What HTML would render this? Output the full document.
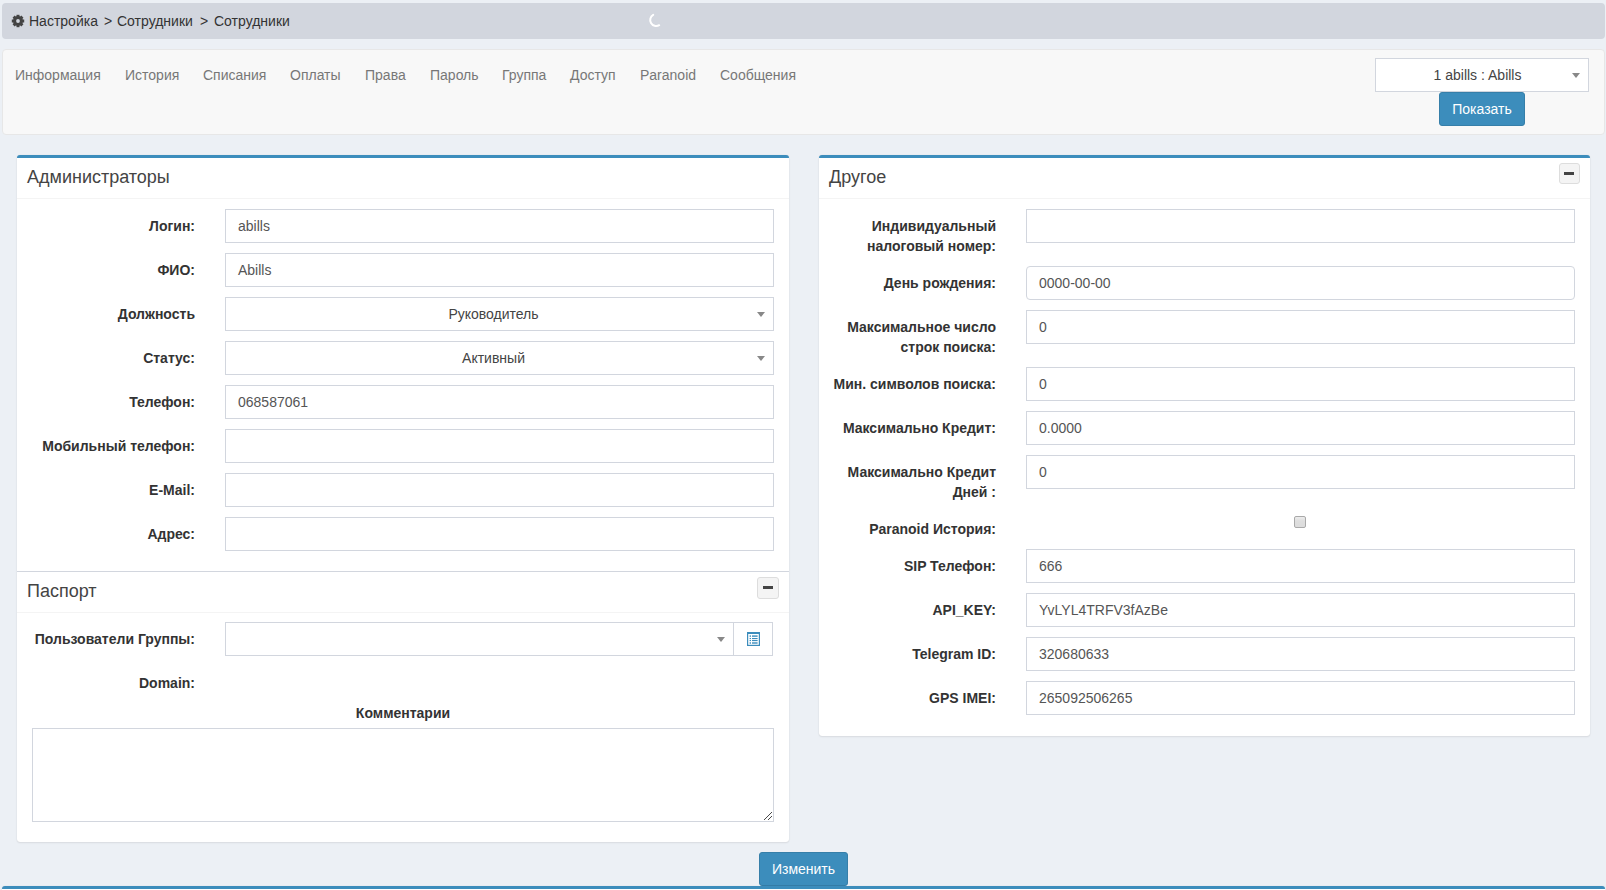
<!DOCTYPE html>
<html><head><meta charset="utf-8">
<style>
*{box-sizing:border-box;margin:0;padding:0}
html,body{width:1606px;height:890px;overflow:hidden;background:#ecf0f5;font-family:"Liberation Sans",sans-serif;font-size:14px;color:#333;line-height:20px}
.abs{position:absolute}
.bc{left:2px;top:3px;width:1603px;height:36px;background:#d2d6de;border-radius:4px;color:#333}
.bc span{position:absolute;top:8px;white-space:nowrap}
.nav{left:2px;top:49px;width:1603px;height:86px;background:#f8f8f8;border:1px solid #e7e7e7;border-radius:4px}
.nav a{position:absolute;top:15px;color:#777;text-decoration:none;white-space:nowrap}
.box{position:absolute;background:#fff;border-top:3px solid #3c8dbc;border-radius:3px;box-shadow:0 0 1px rgba(0,0,0,.13),0 1px 2px rgba(0,0,0,.08)}
.bh{position:absolute;left:0;right:0;top:0;height:41px;border-bottom:1px solid #f4f4f4}
.bt{position:absolute;left:10px;top:9px;font-size:18px;line-height:20px;color:#444;white-space:nowrap}
.lbl{position:absolute;font-weight:bold;text-align:right;color:#333;line-height:20px}
.inp{position:absolute;height:34px;border:1px solid #d2d6de;background:#fff;color:#555;padding:6px 12px;line-height:20px;white-space:nowrap}
.sel{text-align:center;color:#444}
.caret{position:absolute;width:0;height:0;border-left:4px solid transparent;border-right:4px solid transparent;border-top:5px solid #888}
.btn{position:absolute;background:#3c8dbc;border:1px solid #367fa9;border-radius:3px;color:#fff;text-align:center;line-height:20px;padding:6px 0}
.tool{position:absolute;background:#f4f4f4;border:1px solid #ddd;border-radius:3px}
.chk{position:absolute;width:12px;height:12px;border:1px solid #a9a9a9;border-radius:2px;background:linear-gradient(#ededed,#dedede 40%,#dcdcdc)}
.tool i{position:absolute;background:#444;height:3px;width:10px}
</style></head><body>

<!-- breadcrumb -->
<div class="abs bc">
  <svg class="abs" style="left:9px;top:11px" width="14" height="14" viewBox="0 0 14 14">
    <g fill="#444"><circle cx="7" cy="7" r="4.9"/>
    <rect x="5.5" y="0.8" width="3" height="12.4"/><rect x="0.8" y="5.5" width="12.4" height="3"/>
    <rect x="5.5" y="0.8" width="3" height="12.4" transform="rotate(45 7 7)"/><rect x="5.5" y="0.8" width="3" height="12.4" transform="rotate(-45 7 7)"/></g>
    <circle cx="7" cy="7" r="1.9" fill="#d2d6de"/>
  </svg>
  <span style="left:27px">Настройка</span>
  <span style="left:102px">&gt;</span>
  <span style="left:115px">Сотрудники</span>
  <span style="left:198px">&gt;</span>
  <span style="left:212px">Сотрудники</span>
  <svg class="abs" style="left:643px;top:6px" width="20" height="20" viewBox="0 0 20 20">
    <path d="M8.2 5.8 A6 6 0 0 0 14.2 16.2" fill="none" stroke="#fff" stroke-width="2" stroke-linecap="round"/>
  </svg>
</div>

<!-- nav tabs -->
<div class="abs nav">
  <a style="left:12px">Информация</a>
  <a style="left:122px">История</a>
  <a style="left:200px">Списания</a>
  <a style="left:287px">Оплаты</a>
  <a style="left:362px">Права</a>
  <a style="left:427px">Пароль</a>
  <a style="left:499px">Группа</a>
  <a style="left:567px">Доступ</a>
  <a style="left:637px">Paranoid</a>
  <a style="left:717px">Сообщения</a>
  <div class="inp sel" style="left:1372px;top:8px;width:214px;padding:6px 20px 6px 11px">1 abills : Abills</div>
  <div class="caret" style="left:1569px;top:23px"></div>
  <div class="btn" style="left:1436px;top:42px;width:86px;height:34px">Показать</div>
</div>

<!-- left box -->
<div class="box" style="left:17px;top:155px;width:772px;height:687px">
  <div class="bh"><div class="bt">Администраторы</div></div>
  <div class="lbl" style="left:0;top:58px;width:178px">Логин:</div>
  <div class="inp" style="left:208px;top:51px;width:549px">abills</div>
  <div class="lbl" style="left:0;top:102px;width:178px">ФИО:</div>
  <div class="inp" style="left:208px;top:95px;width:549px">Abills</div>
  <div class="lbl" style="left:0;top:146px;width:178px">Должность</div>
  <div class="inp sel" style="left:208px;top:139px;width:549px;padding:6px 21px 6px 9px">Руководитель</div>
  <div class="caret" style="left:740px;top:154px"></div>
  <div class="lbl" style="left:0;top:190px;width:178px">Статус:</div>
  <div class="inp sel" style="left:208px;top:183px;width:549px;padding:6px 21px 6px 9px">Активный</div>
  <div class="caret" style="left:740px;top:198px"></div>
  <div class="lbl" style="left:0;top:234px;width:178px">Телефон:</div>
  <div class="inp" style="left:208px;top:227px;width:549px">068587061</div>
  <div class="lbl" style="left:0;top:278px;width:178px">Мобильный телефон:</div>
  <div class="inp" style="left:208px;top:271px;width:549px"></div>
  <div class="lbl" style="left:0;top:322px;width:178px">E-Mail:</div>
  <div class="inp" style="left:208px;top:315px;width:549px"></div>
  <div class="lbl" style="left:0;top:366px;width:178px">Адрес:</div>
  <div class="inp" style="left:208px;top:359px;width:549px"></div>
  <div class="abs" style="left:0;top:413px;width:772px;height:42px;border-top:1px solid #d2d6de;border-bottom:1px solid #f4f4f4">
    <div class="bt" style="top:9px">Паспорт</div>
    <div class="tool" style="left:740px;top:5px;width:22px;height:22px"><i style="left:5px;top:8px"></i></div>
  </div>
  <div class="lbl" style="left:0;top:471px;width:178px">Пользователи Группы:</div>
  <div class="inp" style="left:208px;top:464px;width:509px"></div>
  <div class="caret" style="left:700px;top:479px"></div>
  <div class="inp" style="left:716px;top:464px;width:40px;padding:0">
    <svg class="abs" style="left:13px;top:9px" width="13" height="14" viewBox="0 0 13 14"><g fill="#3c8dbc"><rect x="0" y="0" width="13" height="2"/><rect x="0" y="0" width="1.2" height="14"/><rect x="11.8" y="0" width="1.2" height="14"/><rect x="0" y="12.8" width="13" height="1.2"/>
    <rect x="2.6" y="3.4" width="1.4" height="1.4"/><rect x="5" y="3.4" width="5.6" height="1.4"/>
    <rect x="2.6" y="6" width="1.4" height="1.1"/><rect x="5" y="6" width="5.6" height="1.1"/>
    <rect x="2.6" y="8" width="1.4" height="1.1"/><rect x="5" y="8" width="5.6" height="1.1"/>
    <rect x="2.6" y="10.3" width="1.4" height="1.4"/><rect x="5" y="10.3" width="5.6" height="1.4"/></g></svg>
  </div>
  <div class="lbl" style="left:0;top:515px;width:178px">Domain:</div>
  <div class="lbl" style="left:15px;top:545px;width:742px;text-align:center">Комментарии</div>
  <div class="inp" style="left:15px;top:570px;width:742px;height:94px"></div>
  <svg class="abs" style="left:747px;top:654px" width="8" height="8" viewBox="0 0 8 8" shape-rendering="crispEdges"><g fill="#4a4a4a"><rect x="0" y="7" width="1" height="1"/><rect x="1" y="6" width="1" height="1"/><rect x="2" y="5" width="1" height="1"/><rect x="3" y="4" width="1" height="1"/><rect x="4" y="3" width="1" height="1"/><rect x="5" y="2" width="1" height="1"/><rect x="6" y="1" width="1" height="1"/><rect x="7" y="0" width="1" height="1"/><rect x="4" y="7" width="1" height="1"/><rect x="5" y="6" width="1" height="1"/><rect x="6" y="5" width="1" height="1"/><rect x="7" y="4" width="1" height="1"/></g></svg>

</div>

<!-- right box -->
<div class="box" style="left:819px;top:155px;width:771px;height:581px">
  <div class="bh"><div class="bt">Другое</div>
  <div class="tool" style="left:740px;top:5px;width:21px;height:21px"><i style="left:4px;top:8px"></i></div></div>
  <div class="lbl" style="left:0;top:58px;width:177px">Индивидуальный<br>налоговый номер:</div>
  <div class="inp" style="left:207px;top:51px;width:549px"></div>
  <div class="lbl" style="left:0;top:115px;width:177px">День рождения:</div>
  <div class="inp" style="left:207px;top:108px;width:549px;border-radius:4px">0000-00-00</div>
  <div class="lbl" style="left:0;top:159px;width:177px">Максимальное число<br>строк поиска:</div>
  <div class="inp" style="left:207px;top:152px;width:549px">0</div>
  <div class="lbl" style="left:0;top:216px;width:177px">Мин. символов поиска:</div>
  <div class="inp" style="left:207px;top:209px;width:549px">0</div>
  <div class="lbl" style="left:0;top:260px;width:177px">Максимально Кредит:</div>
  <div class="inp" style="left:207px;top:253px;width:549px">0.0000</div>
  <div class="lbl" style="left:0;top:304px;width:177px">Максимально Кредит<br>Дней :</div>
  <div class="inp" style="left:207px;top:297px;width:549px">0</div>
  <div class="lbl" style="left:0;top:361px;width:177px">Paranoid История:</div>
  <div class="chk" style="left:475px;top:358px"></div>
  <div class="lbl" style="left:0;top:398px;width:177px">SIP Телефон:</div>
  <div class="inp" style="left:207px;top:391px;width:549px">666</div>
  <div class="lbl" style="left:0;top:442px;width:177px">API_KEY:</div>
  <div class="inp" style="left:207px;top:435px;width:549px">YvLYL4TRFV3fAzBe</div>
  <div class="lbl" style="left:0;top:486px;width:177px">Telegram ID:</div>
  <div class="inp" style="left:207px;top:479px;width:549px">320680633</div>
  <div class="lbl" style="left:0;top:530px;width:177px">GPS IMEI:</div>
  <div class="inp" style="left:207px;top:523px;width:549px">265092506265</div>
</div>

<!-- bottom -->
<div class="btn" style="left:759px;top:852px;width:89px;height:34px">Изменить</div>
<div class="box" style="left:2px;top:886px;width:1603px;height:40px"></div>

</body></html>
